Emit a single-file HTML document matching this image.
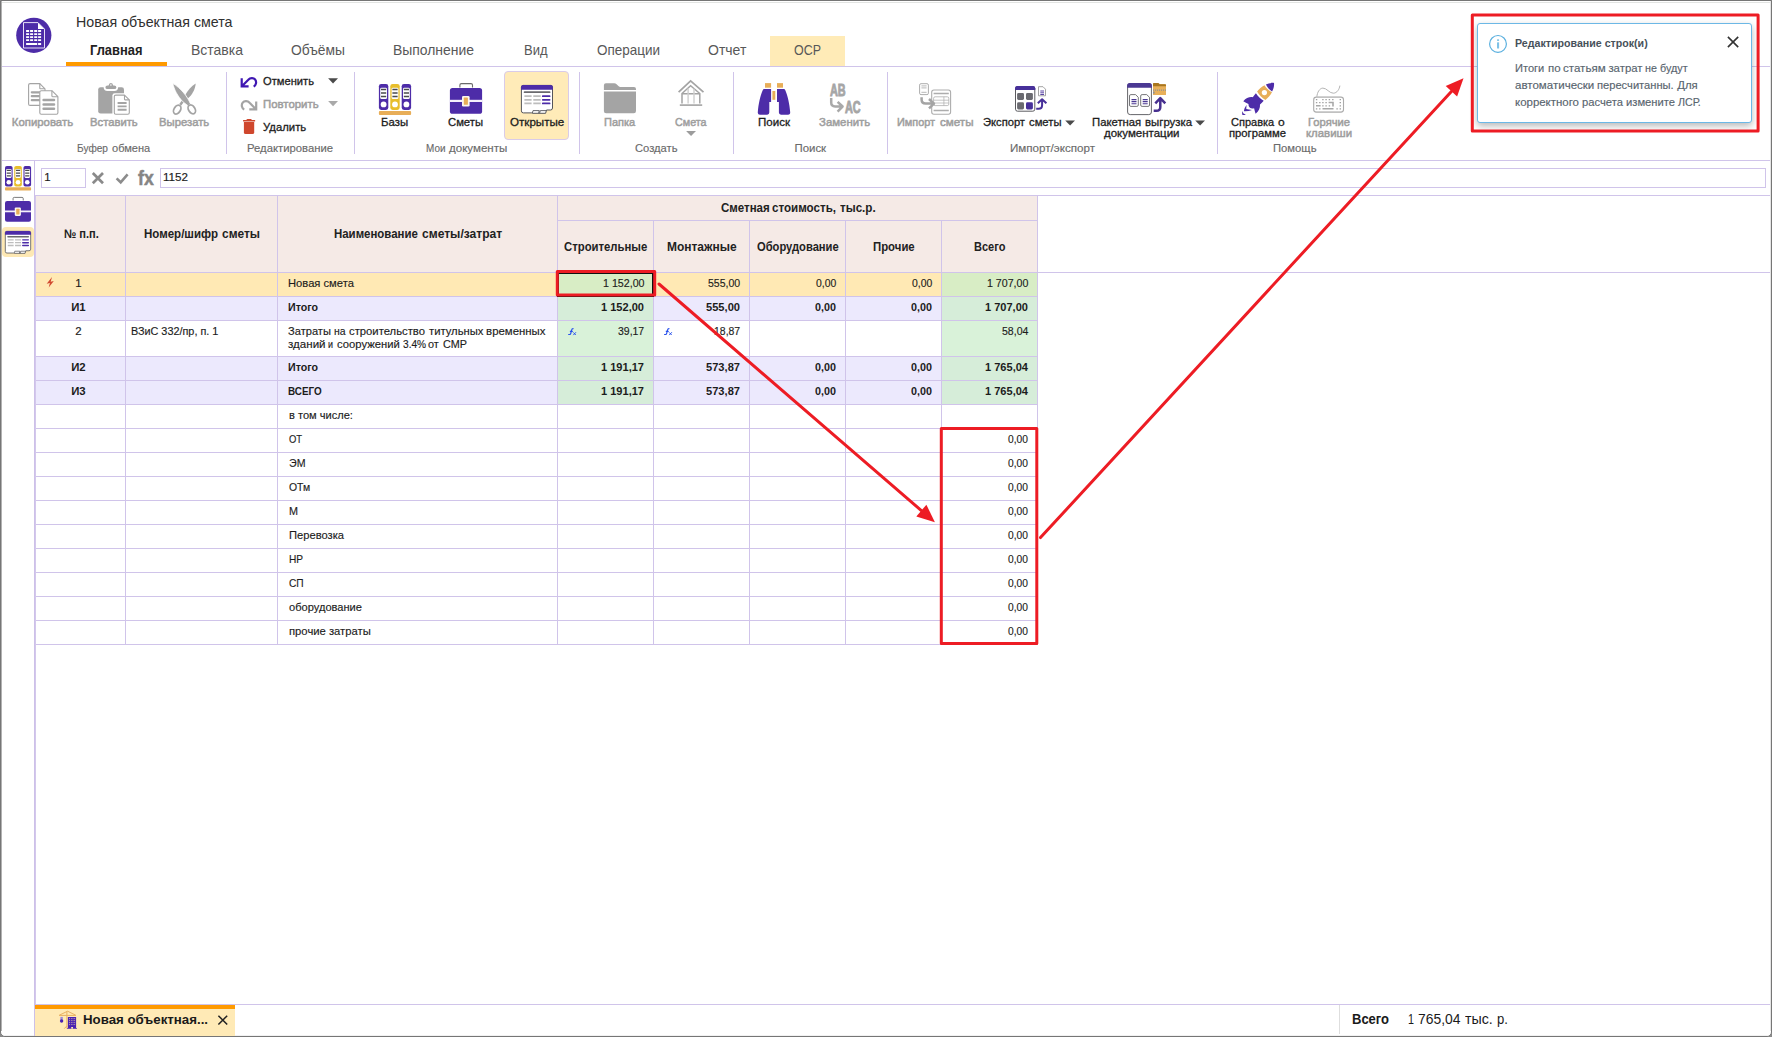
<!DOCTYPE html>
<html><head><meta charset="utf-8"><title>OSR</title>
<style>
html,body{margin:0;padding:0;}
body{width:1772px;height:1037px;overflow:hidden;background:#8a8a8a;font-family:"Liberation Sans",sans-serif;}
#app{position:absolute;left:0;top:0;width:1772px;height:1037px;overflow:hidden;}
#app>div{position:absolute;}
#app>svg{position:absolute;overflow:visible;}
.t{position:absolute;white-space:nowrap;line-height:20px;transform-origin:0 50%;}
.m{-webkit-text-stroke:0.3px currentColor;}
.md{-webkit-text-stroke:0.5px currentColor;}
.r{-webkit-text-stroke:0.15px currentColor;}
.ab{-webkit-text-stroke:0.9px currentColor;}
.fx{-webkit-text-stroke:0.5px currentColor;}
</style></head>
<body>
<div id="app">
<div style="left:0;top:0;width:1772px;height:1037px;box-sizing:border-box;background:#fff;border:1px solid #767676;border-radius:0 0 5px 5px;"></div>
<div style="left:1px;top:1px;width:1px;height:1030px;background:#b2b2b2;"></div>
<div style="left:1770px;top:1px;width:1px;height:1030px;background:#e4e4e4;"></div>
<div style="left:2px;top:2px;width:1768px;height:1px;background:#e2e4e2;"></div>
<div style="left:4px;top:1035px;width:1764px;height:1px;background:#f1f1f1;"></div>
<div style="left:770px;top:36px;width:75px;height:30px;background:#ffebb7;"></div>
<div style="left:2px;top:66px;width:1768px;height:1px;background:#d0c4ea;"></div>
<div style="left:66px;top:62px;width:101px;height:4px;background:#ff9a00;"></div>
<div style="left:2px;top:160px;width:1768px;height:1px;background:#d0c4ea;"></div>
<div style="left:226px;top:72px;width:1px;height:82px;background:#d0c4ea;"></div>
<div style="left:354px;top:72px;width:1px;height:82px;background:#d0c4ea;"></div>
<div style="left:579px;top:72px;width:1px;height:82px;background:#d0c4ea;"></div>
<div style="left:733px;top:72px;width:1px;height:82px;background:#d0c4ea;"></div>
<div style="left:887px;top:72px;width:1px;height:82px;background:#d0c4ea;"></div>
<div style="left:1217px;top:72px;width:1px;height:82px;background:#d0c4ea;"></div>
<div style="left:504px;top:71px;width:65px;height:69px;box-sizing:border-box;background:#ffebb8;border:1px solid #d9cbe9;border-radius:4px;"></div>
<div style="left:34px;top:161px;width:1px;height:875px;background:#cdc0e8;"></div>
<div style="left:2px;top:227px;width:32px;height:30px;background:#fde8b4;border-radius:4px;"></div>
<div style="left:41px;top:168px;width:45px;height:20px;box-sizing:border-box;border:1px solid #d0c4ea;background:#fff;"></div>
<div style="left:160px;top:168px;width:1606px;height:20px;box-sizing:border-box;border:1px solid #d0c4ea;background:#fff;"></div>
<div style="left:36px;top:196px;width:1001px;height:76px;background:#f5eae6;"></div>
<div style="left:36px;top:273px;width:1001px;height:23px;background:#ffe9b4;"></div>
<div style="left:36px;top:297px;width:1001px;height:23px;background:#ece9fd;"></div>
<div style="left:36px;top:357px;width:1001px;height:23px;background:#ece9fd;"></div>
<div style="left:36px;top:381px;width:1001px;height:23px;background:#ece9fd;"></div>
<div style="left:558px;top:273px;width:95px;height:23px;background:#d8edc5;"></div>
<div style="left:558px;top:297px;width:95px;height:23px;background:#d6edd9;"></div>
<div style="left:558px;top:321px;width:95px;height:35px;background:#d9f2d9;"></div>
<div style="left:558px;top:357px;width:95px;height:23px;background:#d6edd9;"></div>
<div style="left:558px;top:381px;width:95px;height:23px;background:#d6edd9;"></div>
<div style="left:942px;top:273px;width:95px;height:23px;background:#d8edc5;"></div>
<div style="left:942px;top:297px;width:95px;height:23px;background:#d6edd9;"></div>
<div style="left:942px;top:321px;width:95px;height:35px;background:#d9f2d9;"></div>
<div style="left:942px;top:357px;width:95px;height:23px;background:#d6edd9;"></div>
<div style="left:942px;top:381px;width:95px;height:23px;background:#d6edd9;"></div>
<div style="left:942px;top:405px;width:95px;height:23px;background:#fff;"></div>
<div style="left:35px;top:195px;width:1735px;height:1px;background:#d0c4ea;"></div>
<div style="left:35px;top:272px;width:1735px;height:1px;background:#d0c4ea;"></div>
<div style="left:557px;top:220px;width:480px;height:1px;background:#d0c4ea;"></div>
<div style="left:35px;top:296px;width:1003px;height:1px;background:#d0c4ea;"></div>
<div style="left:35px;top:320px;width:1003px;height:1px;background:#d0c4ea;"></div>
<div style="left:35px;top:356px;width:1003px;height:1px;background:#d0c4ea;"></div>
<div style="left:35px;top:380px;width:1003px;height:1px;background:#d0c4ea;"></div>
<div style="left:35px;top:404px;width:1003px;height:1px;background:#d0c4ea;"></div>
<div style="left:35px;top:428px;width:1003px;height:1px;background:#d0c4ea;"></div>
<div style="left:35px;top:452px;width:1003px;height:1px;background:#d0c4ea;"></div>
<div style="left:35px;top:476px;width:1003px;height:1px;background:#d0c4ea;"></div>
<div style="left:35px;top:500px;width:1003px;height:1px;background:#d0c4ea;"></div>
<div style="left:35px;top:524px;width:1003px;height:1px;background:#d0c4ea;"></div>
<div style="left:35px;top:548px;width:1003px;height:1px;background:#d0c4ea;"></div>
<div style="left:35px;top:572px;width:1003px;height:1px;background:#d0c4ea;"></div>
<div style="left:35px;top:596px;width:1003px;height:1px;background:#d0c4ea;"></div>
<div style="left:35px;top:620px;width:1003px;height:1px;background:#d0c4ea;"></div>
<div style="left:35px;top:644px;width:1003px;height:1px;background:#d0c4ea;"></div>
<div style="left:35px;top:195px;width:1px;height:810px;background:#d3c8ec;"></div>
<div style="left:125px;top:196px;width:1px;height:449px;background:#d0c4ea;"></div>
<div style="left:277px;top:196px;width:1px;height:449px;background:#d0c4ea;"></div>
<div style="left:557px;top:196px;width:1px;height:449px;background:#d0c4ea;"></div>
<div style="left:653px;top:221px;width:1px;height:424px;background:#d0c4ea;"></div>
<div style="left:749px;top:221px;width:1px;height:424px;background:#d0c4ea;"></div>
<div style="left:845px;top:221px;width:1px;height:424px;background:#d0c4ea;"></div>
<div style="left:941px;top:221px;width:1px;height:424px;background:#d0c4ea;"></div>
<div style="left:1037px;top:196px;width:1px;height:449px;background:#d0c4ea;"></div>
<div style="left:557px;top:272px;width:97px;height:25px;box-sizing:border-box;border:2px solid #111;"></div>
<div style="left:35px;top:1004px;width:1735px;height:1px;background:#d0c4ea;"></div>
<div style="left:35px;top:1005px;width:200px;height:31px;background:#ffeab6;"></div>
<div style="left:35px;top:1005px;width:200px;height:4px;background:#ff9a00;"></div>
<div style="left:1339px;top:1005px;width:1px;height:29px;background:#dedede;"></div>
<div style="left:1477px;top:23px;width:275px;height:100px;box-sizing:border-box;background:#fff;border:1px solid #6cb8e6;border-radius:3px;box-shadow:0 3px 7px rgba(0,0,0,.28);"></div>
<svg width="1772" height="1037" viewBox="0 0 1772 1037" style="left:0;top:0;" fill="none">
<circle cx="33.8" cy="35.3" r="17.6" fill="#4d2ca8"/>
<path d="M23.5 22.6H38L44.5 29.1V48H23.5Z" stroke="#e6e0f6" stroke-width="1" stroke-linejoin="round"/>
<path d="M38 22.8V29.1H44.3Z" fill="#fff"/>
<path d="M26.1 30.1h3v1.8h-3zM26.1 33.2h3v1.8h-3zM26.1 36.2h3v1.8h-3zM26.1 39.2h3v1.8h-3zM30.1 30.1h3v1.8h-3zM30.1 33.2h3v1.8h-3zM30.1 36.2h3v1.8h-3zM30.1 39.2h3v1.8h-3zM34.2 30.1h3v1.8h-3zM34.2 33.2h3v1.8h-3zM34.2 36.2h3v1.8h-3zM34.2 39.2h3v1.8h-3zM38.1 30.1h3v1.8h-3zM38.1 33.2h3v1.8h-3zM38.1 36.2h3v1.8h-3zM38.1 39.2h3v1.8h-3zM26.1 43h11.1v2h-11.1zM38.1 43h3v2h-3z" fill="#fff"/>
<path d="M30.1 83.6H39.8L45 88.8V103.9Q45 105.4 43.5 105.4H30.1Q28.6 105.4 28.6 103.9V85.1Q28.6 83.6 30.1 83.6Z" fill="#fff" stroke="#a4a4a4" stroke-width="1.1" stroke-linejoin="round"/><path d="M39.8 83.6V88.2Q39.8 88.8 40.4 88.8H45" stroke="#a4a4a4" stroke-width="1.1"/>
<path d="M31.8 92.3H40M31.8 96.2H40M31.8 100.2H40" stroke="#a4a4a4" stroke-width="2.2" stroke-linecap="round"/>
<path d="M41.3 90.7H51.9L57.9 96.7V112.7Q57.9 114.2 56.4 114.2H41.3Q39.8 114.2 39.8 112.7V92.2Q39.8 90.7 41.3 90.7Z" fill="#fff" stroke="#a4a4a4" stroke-width="1.1" stroke-linejoin="round"/><path d="M51.9 90.7V96.10000000000001Q51.9 96.7 52.5 96.7H57.9" stroke="#a4a4a4" stroke-width="1.1"/>
<path d="M43.6 100H54M43.6 104.4H54M43.6 108.8H54" stroke="#a4a4a4" stroke-width="2.5" stroke-linecap="round"/>
<rect x="98.2" y="87.2" width="25.8" height="26.4" rx="2.4" fill="#a4a4a4"/>
<path d="M103.6 86.8 Q103.6 91 107.5 91 H114.3 Q118.2 91 118.2 86.8 Z" fill="#fff"/>
<path d="M105.4 87.2 Q105.4 85.4 107.6 85.4 H108.6 Q109.2 83.1 110.9 83.1 Q112.6 83.1 113.2 85.4 H114.2 Q116.4 85.4 116.4 87.2 Q116.4 89.1 114.4 89.1 H107.4 Q105.4 89.1 105.4 87.2Z" fill="#a4a4a4"/>
<circle cx="110.9" cy="85" r="0.8" fill="#fff"/>
<rect x="112.4" y="93.2" width="18.6" height="22.4" rx="2.4" fill="#fff"/>
<path d="M115.8 95.1H124.50000000000001L129.3 99.89999999999999V112.7Q129.3 114.2 127.80000000000001 114.2H115.8Q114.3 114.2 114.3 112.7V96.6Q114.3 95.1 115.8 95.1Z" fill="#fff" stroke="#a4a4a4" stroke-width="1.1" stroke-linejoin="round"/><path d="M124.50000000000001 95.1V99.3Q124.50000000000001 99.89999999999999 125.10000000000001 99.89999999999999H129.3" stroke="#a4a4a4" stroke-width="1.1"/>
<path d="M117.6 103H126.6M117.6 106.4H126.6M117.6 109.7H126.6" stroke="#a4a4a4" stroke-width="1.9"/>
<path d="M195.7 83.5 C191.3 86.2 187.8 90.2 185.5 94.6 L187.9 98.6 C192.2 94.8 195.2 89.5 195.7 83.5Z" fill="#a4a4a4"/>
<path d="M183.4 100.4 L180.3 104.7" stroke="#a4a4a4" stroke-width="2.5"/>
<path d="M172.9 83.3 C173.8 89 177.6 96.4 183.2 102 L188.2 105.9 L190.4 103.7 C187.4 96.4 181 88.5 172.9 83.3Z" fill="#a4a4a4" stroke="#fff" stroke-width="0.8"/>
<ellipse cx="177.2" cy="109.6" rx="3.2" ry="4.8" transform="rotate(32 177.2 109.6)" stroke="#a4a4a4" stroke-width="1.8"/>
<ellipse cx="191.8" cy="109.4" rx="3.2" ry="4.8" transform="rotate(-32 191.8 109.4)" stroke="#a4a4a4" stroke-width="1.8"/>
<path d="M241.7 78.3V86.4H248.6M242.2 85.9L248.3 79.7C250.2 77.6 253.6 77.4 255.2 79.6C256.9 82 256 85.2 253.7 86.7" stroke="#3f17b2" stroke-width="2.2"/>
<path d="M256.2 101.4V109.4H249.3M255.7 108.9L249.6 102.7C247.7 100.6 244.3 100.4 242.7 102.6C241 105 241.9 108.2 244.2 109.7" stroke="#a4a4a4" stroke-width="2.2"/>
<path d="M246.4 120.3Q246.4 119.1 247.6 119.1H250.6Q251.8 119.1 251.8 120.3Z" fill="#cf472d"/>
<rect x="243" y="120" width="12.2" height="1.6" rx="0.5" fill="#cf472d"/>
<path d="M243.9 122.1H254.2V132.4Q254.2 134.1 252.5 134.1H245.6Q243.9 134.1 243.9 132.4Z" fill="#cf472d"/>
<path d="M328.1 78.2H338L333.05 83.4Z" fill="#4a4a4a"/>
<path d="M328.1 101.1H338L333.05 106.3Z" fill="#a9a9a9"/>
<rect x="378.9" y="84" width="9.4" height="25.9" rx="2.3" fill="#4d2ca8"/><rect x="380.2" y="87.7" width="6.8" height="11.4" rx="1.4" fill="#fff"/><path d="M381.0 89.5h5.2M381.0 93h5.2M381.0 96.5h5.2" stroke="#4a4a4e" stroke-width="1.5"/><circle cx="383.59999999999997" cy="104.4" r="2.9" fill="#fff"/><rect x="390.3" y="84" width="9.4" height="25.9" rx="2.3" fill="#e8be2c"/><rect x="391.6" y="87.7" width="6.8" height="11.4" rx="1.4" fill="#fff"/><path d="M392.40000000000003 89.5h5.2M392.40000000000003 93h5.2M392.40000000000003 96.5h5.2" stroke="#4a4a4e" stroke-width="1.5"/><circle cx="395.0" cy="104.4" r="2.9" fill="#fff"/><rect x="401.7" y="84" width="9.4" height="25.9" rx="2.3" fill="#4d2ca8"/><rect x="403.0" y="87.7" width="6.8" height="11.4" rx="1.4" fill="#fff"/><path d="M403.8 89.5h5.2M403.8 93h5.2M403.8 96.5h5.2" stroke="#4a4a4e" stroke-width="1.5"/><circle cx="406.4" cy="104.4" r="2.9" fill="#fff"/><rect x="378.9" y="110.9" width="32.2" height="4" rx="1" fill="#e8ae58"/>
<path d="M459.9 87.4V85Q459.9 83.6 461.4 83.6H471Q472.5 83.6 472.5 85V87.4" stroke="#6a6a6a" stroke-width="1.1"/><rect x="449.9" y="88" width="32.2" height="25.8" rx="2.6" fill="#4d2ca8"/><rect x="449.9" y="99.8" width="32.2" height="2.2" fill="#f4f0fb"/><rect x="462" y="96" width="7.6" height="10.5" rx="1.3" fill="#fbf6ee"/><rect x="463.8" y="97.6" width="4.1" height="7.2" rx="0.6" fill="#e8ae58"/>
<path d="M523.2 85.4H550.7Q552.5 85.4 552.5 87.2V108Q552.5 110 550.5 110H546.5L545.6 113.3H532.6L531.8 112.9H523.4Q521.4 112.9 521.4 110.9V87.2Q521.4 85.4 523.2 85.4Z" fill="#fff" stroke="#55555a" stroke-width="1"/><path d="M521 89.7V87.3Q521 85 523.3 85H550.6Q552.9 85 552.9 87.3V89.7Z" fill="#4d2ca8"/><path d="M532.3 113.2L533 110.6H539.3L538.6 113.2M539.6 113.2L540.3 110.6H546.4" stroke="#55555a" stroke-width="0.9"/><path d="M524.6 92.2H549.6" stroke="#6a6a6e" stroke-width="1.8" stroke-linecap="round"/><path d="M524.4 96.2H531.6M533.3 96.2H540.7M524.4 99.8H531.6M533.3 99.8H540.7M524.4 103.4H531.6M533.3 103.4H540.7" stroke="#bdbdbd" stroke-width="1.7"/><path d="M542.8 96.2H549.6M542.8 99.8H549.6M542.8 103.4H549.6" stroke="#4d2ca8" stroke-width="1.8" stroke-linecap="round"/>
<g transform="translate(5 166) scale(0.81 0.793) translate(-378.9 -84)"><rect x="378.9" y="84" width="9.4" height="25.9" rx="2.3" fill="#4d2ca8"/><rect x="380.2" y="87.7" width="6.8" height="11.4" rx="1.4" fill="#fff"/><path d="M381.0 89.5h5.2M381.0 93h5.2M381.0 96.5h5.2" stroke="#4a4a4e" stroke-width="1.5"/><circle cx="383.59999999999997" cy="104.4" r="2.9" fill="#fff"/><rect x="390.3" y="84" width="9.4" height="25.9" rx="2.3" fill="#e8be2c"/><rect x="391.6" y="87.7" width="6.8" height="11.4" rx="1.4" fill="#fff"/><path d="M392.40000000000003 89.5h5.2M392.40000000000003 93h5.2M392.40000000000003 96.5h5.2" stroke="#4a4a4e" stroke-width="1.5"/><circle cx="395.0" cy="104.4" r="2.9" fill="#fff"/><rect x="401.7" y="84" width="9.4" height="25.9" rx="2.3" fill="#4d2ca8"/><rect x="403.0" y="87.7" width="6.8" height="11.4" rx="1.4" fill="#fff"/><path d="M403.8 89.5h5.2M403.8 93h5.2M403.8 96.5h5.2" stroke="#4a4a4e" stroke-width="1.5"/><circle cx="406.4" cy="104.4" r="2.9" fill="#fff"/><rect x="378.9" y="110.9" width="32.2" height="4" rx="1" fill="#e8ae58"/></g>
<g transform="translate(5 197) scale(0.807 0.808) translate(-449.9 -83.1)"><path d="M459.9 87.4V85Q459.9 83.6 461.4 83.6H471Q472.5 83.6 472.5 85V87.4" stroke="#6a6a6a" stroke-width="1.1"/><rect x="449.9" y="88" width="32.2" height="25.8" rx="2.6" fill="#4d2ca8"/><rect x="449.9" y="99.8" width="32.2" height="2.2" fill="#f4f0fb"/><rect x="462" y="96" width="7.6" height="10.5" rx="1.3" fill="#fbf6ee"/><rect x="463.8" y="97.6" width="4.1" height="7.2" rx="0.6" fill="#e8ae58"/></g>
<g transform="translate(5 231) scale(0.815 0.79) translate(-521 -85)"><path d="M523.2 85.4H550.7Q552.5 85.4 552.5 87.2V108Q552.5 110 550.5 110H546.5L545.6 113.3H532.6L531.8 112.9H523.4Q521.4 112.9 521.4 110.9V87.2Q521.4 85.4 523.2 85.4Z" fill="#fff" stroke="#55555a" stroke-width="1"/><path d="M521 89.7V87.3Q521 85 523.3 85H550.6Q552.9 85 552.9 87.3V89.7Z" fill="#4d2ca8"/><path d="M532.3 113.2L533 110.6H539.3L538.6 113.2M539.6 113.2L540.3 110.6H546.4" stroke="#55555a" stroke-width="0.9"/><path d="M524.6 92.2H549.6" stroke="#6a6a6e" stroke-width="1.8" stroke-linecap="round"/><path d="M524.4 96.2H531.6M533.3 96.2H540.7M524.4 99.8H531.6M533.3 99.8H540.7M524.4 103.4H531.6M533.3 103.4H540.7" stroke="#bdbdbd" stroke-width="1.7"/><path d="M542.8 96.2H549.6M542.8 99.8H549.6M542.8 103.4H549.6" stroke="#4d2ca8" stroke-width="1.8" stroke-linecap="round"/></g>
<path d="M603.9 89.9V85.2Q603.9 83.2 605.9 83.2H614.2Q615.6 83.2 616.6 84.3L618.4 86Q619.3 86.9 620.6 86.9H634Q636 86.9 636 88.9V89.9Z" fill="#a4a4a4"/>
<path d="M603.9 91.6H636V111Q636 113.2 633.8 113.2H606.1Q603.9 113.2 603.9 111Z" fill="#a4a4a4"/>
<path d="M678.6 92.2L690.6 80.8L703.5 92.2" stroke="#a4a4a4" stroke-width="1.7"/>
<path d="M682 103.4V93.5L690.6 85.7L699.8 93.5V103.4M682 93.8H699.8" stroke="#a4a4a4" stroke-width="1.5"/>
<path d="M688.1 88.5V103.4M694 88.5V103.4" stroke="#cfcfcf" stroke-width="1.4"/>
<rect x="679.8" y="104.3" width="22.4" height="1.6" fill="#a4a4a4"/>
<path d="M686.1 131.1H696L691.05 136.1Z" fill="#9c9c9c"/>
<rect x="765" y="83.1" width="6.1" height="4.6" fill="#e8ae58"/><rect x="777" y="83.1" width="6" height="4.6" fill="#e8ae58"/>
<rect x="772.4" y="91" width="2.9" height="8.8" fill="#e8ae58"/>
<path d="M764.2 89.1H771.1V102H769.3V112.6Q769.3 114.7 767.2 114.7H760Q757.6 114.7 757.8 112.3C758.4 103.5 760.5 95.5 762.6 90.4Q763.2 89.1 764.2 89.1Z" fill="#4d2ca8"/>
<path d="M783.9 89.1H777V102H778.9V112.6Q778.9 114.7 781 114.7H788Q790.4 114.7 790.2 112.3C789.6 103.5 787.5 95.5 785.4 90.4Q784.8 89.1 783.9 89.1Z" fill="#4d2ca8"/>
<path d="M831.2 98V102.6Q831.2 106.5 835.1 106.5H841.5M837.6 101.8L842.6 106.5L837.6 111.6" stroke="#a9a9a9" stroke-width="2.5" stroke-linejoin="round"/>
<rect x="919.6" y="83.7" width="8.8" height="10.9" rx="1.4" stroke="#adadad" stroke-width="1" fill="#fff"/>
<path d="M921.4 85.9H926.6M921.4 87.9H926.6M921.4 92.4H926.6" stroke="#c6c6c6" stroke-width="1.1"/>
<rect x="931.7" y="90" width="18.9" height="24.2" rx="2.2" stroke="#adadad" stroke-width="1.1" fill="#fff"/>
<path d="M933.6 93.6H948.8M933.6 110.5H948.8" stroke="#adadad" stroke-width="1.5"/>
<rect x="933.6" y="96.8" width="15.2" height="8.8" rx="1.5" stroke="#adadad" stroke-width="0.8"/><path d="M933.6 100.2H948.8M933.6 103H948.8M943.9 96.8V105.6" stroke="#adadad" stroke-width="0.7"/>
<path d="M921.6 97.2V99.6Q921.6 103.6 925.6 103.6H933M929 99L934 103.6L929 108.3" stroke="#a4a4a4" stroke-width="2.5" stroke-linejoin="round"/>
<rect x="1015.5" y="86.5" width="19.3" height="24.7" rx="2" fill="#fff" stroke="#5c5c60" stroke-width="1"/>
<path d="M1015 90V88.3Q1015 86 1017.3 86H1033Q1035.3 86 1035.3 88.3V90Z" fill="#47309a"/>
<rect x="1017.1" y="92.9" width="6.9" height="7" rx="1.4" fill="#6a6a70"/><rect x="1026" y="92.9" width="6.9" height="7" rx="1.4" fill="#6a6a70"/><rect x="1017.1" y="102.3" width="6.9" height="7.1" rx="1.4" fill="#6a6a70"/>
<rect x="1026" y="102.3" width="6.9" height="7.1" rx="1.4" fill="#47309a"/>
<path d="M1038.5 86.7H1043L1045.5 89.2V95.8H1038.5Z" fill="#fff" stroke="#9a9a9a" stroke-width="0.9" stroke-linejoin="round"/>
<path d="M1040.3 91H1044M1040.3 92.8H1044M1040.3 94.5H1044" stroke="#47309a" stroke-width="0.9"/>
<path d="M1036.2 108.7H1038.6Q1042.1 108.7 1042.1 105.2V100M1037.8 103.2L1042.1 99.2L1046.4 103.2" stroke="#47309a" stroke-width="2" stroke-linejoin="round"/>
<path d="M1065.2 120.6H1075L1070.1 125.6Z" fill="#4a4a4a"/>
<rect x="1127.6" y="83.6" width="23.8" height="31" rx="2.6" fill="#fff" stroke="#66666a" stroke-width="1"/>
<path d="M1127.1 87.7V85.7Q1127.1 83.1 1129.7 83.1H1149.3Q1151.9 83.1 1151.9 85.7V87.7Z" fill="#4b3893"/>
<path d="M1130.9 94.6H1135.5L1138.3 97.3V105Q1138.3 106.4 1136.9 106.4H1130.9Q1129.5 106.4 1129.5 105V96Q1129.5 94.6 1130.9 94.6Z" fill="#fff" stroke="#66666a" stroke-width="0.9"/>
<path d="M1131.5 99.6H1136.5M1131.5 101.6H1136.5M1131.5 103.7H1136.5" stroke="#4b3893" stroke-width="1.1"/>
<path d="M1142.1000000000001 94.6H1146.7L1149.5 97.3V105Q1149.5 106.4 1148.1000000000001 106.4H1142.1000000000001Q1140.7 106.4 1140.7 105V96Q1140.7 94.6 1142.1000000000001 94.6Z" fill="#fff" stroke="#66666a" stroke-width="0.9"/>
<path d="M1142.7 99.6H1147.7M1142.7 101.6H1147.7M1142.7 103.7H1147.7" stroke="#4b3893" stroke-width="1.1"/>
<path d="M1153 95V84Q1153 83.1 1153.9 83.1H1158Q1158.7 83.1 1159.2 83.7L1159.6 84.2H1165.1Q1166 84.2 1166 85.1V95Z" fill="#e8b05a"/>
<path d="M1153 86.3V84Q1153 83.1 1153.9 83.1H1158Q1158.7 83.1 1159.2 83.7L1159.6 84.2H1165.1Q1166 84.2 1166 85.1V86.3Z" fill="#a8761e"/>
<path d="M1153 90.2H1166" stroke="#8a8f9a" stroke-width="1.2" stroke-dasharray="1 1"/><rect x="1153" y="91.6" width="1.6" height="2" fill="#8a8f9a"/>
<path d="M1153.7 110.8H1156.4Q1160.3 110.8 1160.3 106.9V99.4M1155.3 103.4L1160.3 98.2L1165.3 103.4" stroke="#47308f" stroke-width="2.5" stroke-linejoin="round"/>
<path d="M1195.2 120.6H1205L1200.1 125.6Z" fill="#4a4a4a"/>
<path d="M1274 82.9C1271 82.7 1268.2 83.3 1265.9 84.5C1267.4 87.4 1269.4 89.8 1272.1 91.4C1273.6 89 1274.3 86.1 1274 82.9Z" fill="#4d2ca8"/>
<path d="M1264.5 85.2C1261.6 86.8 1259.1 88.9 1257.1 91.4C1259.1 94.9 1261.9 97.7 1265.4 99.9C1268 97.9 1270.3 95.4 1272 92.3C1269 90.6 1266.3 88.3 1264.5 85.2Z" fill="#e8ae58"/>
<circle cx="1264.4" cy="92.6" r="2.6" fill="#fff"/>
<path d="M1255.9 93.3C1258 96.6 1260.5 99 1263.7 100.8C1262.5 102.2 1261.3 103.4 1260 104.4C1260.3 108 1258.8 111.2 1255.6 113.8C1254.9 111.6 1254.4 109.8 1254.1 108.2C1252.6 108.6 1251.3 108.6 1250.3 108.1C1249 107.2 1248.4 105.7 1248.5 104C1246.8 103.4 1245.1 102.5 1243.3 101.3C1246 98.1 1249.3 96.7 1252.8 97.2C1253.7 95.9 1254.8 94.6 1255.9 93.3Z" fill="#4d2ca8"/>
<path d="M1246.7 104.9C1245 106.8 1244 109 1243.9 111.3C1246.7 111.5 1249.5 111.1 1252 110.1C1249.8 109.9 1247.9 109.6 1246.3 109.1C1246.2 107.7 1246.4 106.3 1246.7 104.9ZM1242.4 111.1C1242 112.4 1242 113.7 1242.4 115C1243.6 115.1 1244.8 114.9 1245.9 114.4C1245 114.1 1244.2 113.8 1243.5 113.4C1243 112.7 1242.6 111.9 1242.4 111.1Z" fill="#4d2ca8"/>
<rect x="1313.7" y="97.1" width="29.8" height="15" rx="2.6" stroke="#ababab" stroke-width="1.1" fill="#fff"/>
<path d="M1316 97.3H1341.5M1316 112.2H1341.5" stroke="#c4c4c4" stroke-width="0.8"/>
<path d="M1316.9 96.6C1317.2 92.5 1319.5 88.2 1322.9 88.1C1326.7 88 1329.5 93.4 1333.4 93.2C1337 93 1339.3 89.5 1339.9 85.6" stroke="#ababab" stroke-width="0.9"/>
<path d="M1315.8999999999999 99.7h1.4M1322.2 99.7h1.4M1325.3999999999999 99.7h1.4M1328.7 99.7h1.4M1332.1 99.7h1.4M1339.6 99.7h1.4M1315.8999999999999 102.7h1.4M1319.1 102.7h1.4M1322.2 102.7h1.4M1325.3999999999999 102.7h1.4M1339.6 102.7h1.4M1322.2 105.8h1.4M1325.3999999999999 105.8h1.4M1328.7 105.8h1.4M1339.6 105.8h1.4M1315.8999999999999 108.8h1.4M1319.1 108.8h1.4M1336.3999999999999 108.8h1.4M1339.6 108.8h1.4" stroke="#a0a0a0" stroke-width="1.3"/>
<path d="M1316 105.8H1320.6M1322.5 108.8H1333.5" stroke="#a8a8a8" stroke-width="1.5"/><path d="M1328.6 102.5H1333V106.5" stroke="#a8a8a8" stroke-width="1.6"/>
<path d="M92.8 173L103 183.2M103 173L92.8 183.2" stroke="#8a8a8a" stroke-width="2.7"/>
<path d="M116.6 178.4L120.7 182.3L127.6 174.3" stroke="#8c8c8c" stroke-width="2.6"/>
<path d="M52 277.1L46.7 283.7L49.9 283L48.7 287.5L53.8 281.1L50.7 281.8Z" fill="#d1492f"/>
<path d="M568.1999999999999 334.5H569.5Q570.6 334.5 570.8 333.3L571.6 329.9Q571.9 328.4 573.5 328.6M569.9 331.4H572.8" stroke="#2750ec" stroke-width="1.15"/>
<path d="M573.3 332.4L575.8 335M576.0 332.2L573.3 335.1" stroke="#2750ec" stroke-width="0.95"/>
<path d="M664.0999999999999 334.5H665.4Q666.5 334.5 666.6999999999999 333.3L667.5 329.9Q667.8 328.4 669.4 328.6M665.8 331.4H668.6999999999999" stroke="#2750ec" stroke-width="1.15"/>
<path d="M669.1999999999999 332.4L671.6999999999999 335M671.9 332.2L669.1999999999999 335.1" stroke="#2750ec" stroke-width="0.95"/>
<path d="M66.9 1011.3V1028.6M59.1 1015.4H75.9M59.3 1015.2L67.6 1011.2L75.7 1015.2" stroke="#e8b060" stroke-width="1"/>
<path d="M64.3 1028.6L66.6 1026.2" stroke="#e8b060" stroke-width="1"/>
<rect x="60.4" y="1016.9" width="2.4" height="3" fill="#9c8bd6"/><circle cx="61.6" cy="1021" r="1.7" fill="#4a22b2"/>
<path d="M67.9 1017H76.1V1027.9H76.9V1028.8H67.1V1027.9H67.9Z" fill="#4a22b2"/>
<path d="M69.2 1018.6h0.8M70.9 1018.6h0.8M72.6 1018.6h0.8M74.3 1018.6h0.8M69.2 1020.6h0.8M70.9 1020.6h0.8M72.6 1020.6h0.8M74.3 1020.6h0.8M69.2 1022.6h0.8M70.9 1022.6h0.8M72.6 1022.6h0.8M74.3 1022.6h0.8M69.2 1024.6h0.8M70.9 1024.6h0.8M72.6 1024.6h0.8M74.3 1024.6h0.8" stroke="#f1d9a6" stroke-width="0.8"/>
<rect x="71.2" y="1027" width="1.8" height="1.6" fill="#ffe9b4"/>
<path d="M218.4 1015.7L227.2 1024.5M227.2 1015.7L218.4 1024.5" stroke="#222" stroke-width="1.5"/>
<circle cx="1498" cy="43.9" r="8.4" stroke="#5bb0df" stroke-width="1.2"/>
<rect x="1497" y="42.2" width="2.1" height="6.4" rx="0.6" fill="#7fc2e7"/><rect x="1497" y="39.2" width="2.1" height="1.7" rx="0.6" fill="#7fc2e7"/>
<path d="M1727.9 36.9L1738.2 47.1M1738.2 36.9L1727.9 47.1" stroke="#333" stroke-width="1.6"/>
</svg>
<span class="t" style="font-size:14.5px;font-weight:400;color:#303030;top:11.98px;left:76.00px;transform:scaleX(0.9813);">Новая объектная смета</span>
<span class="t" style="font-size:14.5px;font-weight:700;color:#222;top:39.98px;left:90.00px;transform:scaleX(0.8901);">Главная</span>
<span class="t" style="font-size:14.5px;font-weight:400;color:#585858;top:39.98px;left:191.00px;transform:scaleX(0.9646);">Вставка</span>
<span class="t" style="font-size:14.5px;font-weight:400;color:#585858;top:39.98px;left:291.00px;transform:scaleX(0.9536);">Объёмы</span>
<span class="t" style="font-size:14.5px;font-weight:400;color:#585858;top:39.98px;left:393.00px;transform:scaleX(0.9596);">Выполнение</span>
<span class="t" style="font-size:14.5px;font-weight:400;color:#585858;top:39.98px;left:523.50px;transform:scaleX(0.8958);">Вид</span>
<span class="t" style="font-size:14.5px;font-weight:400;color:#585858;top:39.98px;left:597.00px;transform:scaleX(0.9288);">Операции</span>
<span class="t" style="font-size:14.5px;font-weight:400;color:#585858;top:39.98px;left:707.90px;transform:scaleX(0.9647);">Отчет</span>
<span class="t" style="font-size:14.5px;font-weight:400;color:#585858;top:39.98px;left:794.00px;transform:scaleX(0.8593);">ОСР</span>
<span class="t md" style="font-size:11.4px;font-weight:400;color:#9e9e9e;top:112.05px;left:11.75px;">Копировать</span>
<span class="t md" style="font-size:11.4px;font-weight:400;color:#9e9e9e;top:112.05px;left:89.50px;transform:scaleX(0.9887);">Вставить</span>
<span class="t md" style="font-size:11.4px;font-weight:400;color:#9e9e9e;top:112.05px;left:159.25px;transform:scaleX(0.9917);">Вырезать</span>
<span class="t m" style="font-size:11.4px;font-weight:400;color:#1c1c1c;top:71.05px;left:263.00px;transform:scaleX(0.9796);">Отменить</span>
<span class="t md" style="font-size:11.4px;font-weight:400;color:#9e9e9e;top:94.05px;left:263.00px;">Повторить</span>
<span class="t m" style="font-size:11.4px;font-weight:400;color:#1c1c1c;top:117.05px;left:263.00px;transform:scaleX(0.9943);">Удалить</span>
<span class="t m" style="font-size:11.4px;font-weight:400;color:#1c1c1c;top:112.05px;left:381.00px;">Базы</span>
<span class="t m" style="font-size:11.4px;font-weight:400;color:#1c1c1c;top:112.05px;left:448.00px;transform:scaleX(0.9881);">Сметы</span>
<span class="t m" style="font-size:11.4px;font-weight:400;color:#1c1c1c;top:112.05px;left:509.50px;transform:scaleX(1.0173);">Открытые</span>
<span class="t md" style="font-size:11.4px;font-weight:400;color:#9e9e9e;top:112.05px;left:603.75px;transform:scaleX(0.9685);">Папка</span>
<span class="t md" style="font-size:11.4px;font-weight:400;color:#9e9e9e;top:112.05px;left:674.50px;transform:scaleX(0.9421);">Смета</span>
<span class="t m" style="font-size:11.4px;font-weight:400;color:#1c1c1c;top:112.05px;left:757.50px;transform:scaleX(1.0134);">Поиск</span>
<span class="t md" style="font-size:11.4px;font-weight:400;color:#9e9e9e;top:112.05px;left:819.00px;">Заменить</span>
<span class="t md" style="font-size:11.4px;font-weight:400;color:#9e9e9e;top:112.05px;left:897.00px;transform:scaleX(0.9541);">Импорт</span>
<span class="t md" style="font-size:11.4px;font-weight:400;color:#9e9e9e;top:112.05px;left:939.50px;transform:scaleX(1.0185);">сметы</span>
<span class="t m" style="font-size:11.4px;font-weight:400;color:#1c1c1c;top:112.05px;left:982.50px;transform:scaleX(0.9810);">Экспорт</span>
<span class="t m" style="font-size:11.4px;font-weight:400;color:#1c1c1c;top:112.05px;left:1028.75px;transform:scaleX(0.9881);">сметы</span>
<span class="t m" style="font-size:11.4px;font-weight:400;color:#1c1c1c;top:112.05px;left:1092.00px;transform:scaleX(0.9928);">Пакетная</span>
<span class="t m" style="font-size:11.4px;font-weight:400;color:#1c1c1c;top:112.05px;left:1145.00px;">выгрузка</span>
<span class="t m" style="font-size:11.4px;font-weight:400;color:#1c1c1c;top:123.05px;left:1104.00px;transform:scaleX(1.0094);">документации</span>
<span class="t m" style="font-size:11.4px;font-weight:400;color:#1c1c1c;top:112.05px;left:1231.25px;transform:scaleX(0.9678);">Справка</span>
<span class="t m" style="font-size:11.4px;font-weight:400;color:#1c1c1c;top:112.05px;left:1278.00px;transform:scaleX(1.0562);">о</span>
<span class="t m" style="font-size:11.4px;font-weight:400;color:#1c1c1c;top:123.05px;left:1229.00px;transform:scaleX(0.9884);">программе</span>
<span class="t md" style="font-size:11.4px;font-weight:400;color:#9e9e9e;top:112.05px;left:1307.50px;transform:scaleX(0.9825);">Горячие</span>
<span class="t md" style="font-size:11.4px;font-weight:400;color:#9e9e9e;top:123.05px;left:1306.00px;">клавиши</span>
<span class="t r" style="font-size:11.4px;font-weight:400;color:#6a6a6a;top:138.05px;left:77.00px;transform:scaleX(0.8897);">Буфер</span>
<span class="t r" style="font-size:11.4px;font-weight:400;color:#6a6a6a;top:138.05px;left:111.75px;transform:scaleX(0.9707);">обмена</span>
<span class="t r" style="font-size:11.4px;font-weight:400;color:#6a6a6a;top:138.05px;left:247.00px;transform:scaleX(0.9910);">Редактирование</span>
<span class="t r" style="font-size:11.4px;font-weight:400;color:#6a6a6a;top:138.05px;left:425.50px;transform:scaleX(0.8733);">Мои</span>
<span class="t r" style="font-size:11.4px;font-weight:400;color:#6a6a6a;top:138.05px;left:449.25px;transform:scaleX(1.0125);">документы</span>
<span class="t r" style="font-size:11.4px;font-weight:400;color:#6a6a6a;top:138.05px;left:634.50px;transform:scaleX(0.9816);">Создать</span>
<span class="t r" style="font-size:11.4px;font-weight:400;color:#6a6a6a;top:138.05px;left:794.50px;">Поиск</span>
<span class="t r" style="font-size:11.4px;font-weight:400;color:#6a6a6a;top:138.05px;left:1009.50px;transform:scaleX(1.0189);">Импорт/экспорт</span>
<span class="t r" style="font-size:11.4px;font-weight:400;color:#6a6a6a;top:138.05px;left:1272.50px;transform:scaleX(0.9886);">Помощь</span>
<span class="t r" style="font-size:11.4px;font-weight:400;color:#1c1c1c;top:167.05px;left:44.30px;">1</span>
<span class="t r" style="font-size:11.4px;font-weight:400;color:#1c1c1c;top:167.05px;left:162.50px;transform:scaleX(1.0204);">1152</span>
<span class="t" style="font-size:12.4px;font-weight:700;color:#222;top:223.70px;left:63.60px;transform:scaleX(0.8898);">№ п.п.</span>
<span class="t" style="font-size:12.4px;font-weight:700;color:#222;top:223.70px;left:144.30px;transform:scaleX(0.9288);">Номер/шифр</span>
<span class="t" style="font-size:12.4px;font-weight:700;color:#222;top:223.70px;left:221.70px;transform:scaleX(0.9635);">сметы</span>
<span class="t" style="font-size:12.4px;font-weight:700;color:#222;top:223.70px;left:334.30px;transform:scaleX(0.9229);">Наименование</span>
<span class="t" style="font-size:12.4px;font-weight:700;color:#222;top:223.70px;left:421.50px;transform:scaleX(0.9736);">сметы/затрат</span>
<span class="t" style="font-size:12.4px;font-weight:700;color:#222;top:197.70px;left:720.50px;transform:scaleX(0.9273);">Сметная</span>
<span class="t" style="font-size:12.4px;font-weight:700;color:#222;top:197.70px;left:772.40px;transform:scaleX(0.9354);">стоимость,</span>
<span class="t" style="font-size:12.4px;font-weight:700;color:#222;top:197.70px;left:839.60px;transform:scaleX(0.9395);">тыс.р.</span>
<span class="t" style="font-size:12.4px;font-weight:700;color:#222;top:236.70px;left:564.40px;transform:scaleX(0.9135);">Строительные</span>
<span class="t" style="font-size:12.4px;font-weight:700;color:#222;top:236.70px;left:667.00px;transform:scaleX(0.9656);">Монтажные</span>
<span class="t" style="font-size:12.4px;font-weight:700;color:#222;top:236.70px;left:757.00px;transform:scaleX(0.9015);">Оборудование</span>
<span class="t" style="font-size:12.4px;font-weight:700;color:#222;top:236.70px;left:873.00px;transform:scaleX(0.9177);">Прочие</span>
<span class="t" style="font-size:12.4px;font-weight:700;color:#222;top:236.70px;left:974.30px;transform:scaleX(0.8896);">Всего</span>
<span class="t r" style="font-size:11.4px;font-weight:400;color:#1c1c1c;top:273.05px;left:75.13px;">1</span>
<span class="t r" style="font-size:11.4px;font-weight:400;color:#1c1c1c;top:273.05px;left:288.30px;transform:scaleX(0.9827);">Новая смета</span>
<span class="t r" style="font-size:11.4px;font-weight:400;color:#1c1c1c;top:273.05px;left:602.50px;transform:scaleX(0.9359);">1 152,00</span>
<span class="t r" style="font-size:11.4px;font-weight:400;color:#1c1c1c;top:273.05px;left:707.80px;transform:scaleX(0.9241);">555,00</span>
<span class="t r" style="font-size:11.4px;font-weight:400;color:#1c1c1c;top:273.05px;left:815.60px;transform:scaleX(0.9111);">0,00</span>
<span class="t r" style="font-size:11.4px;font-weight:400;color:#1c1c1c;top:273.05px;left:911.50px;transform:scaleX(0.9111);">0,00</span>
<span class="t r" style="font-size:11.4px;font-weight:400;color:#1c1c1c;top:273.05px;left:986.60px;transform:scaleX(0.9336);">1 707,00</span>
<span class="t" style="font-size:11.4px;font-weight:700;color:#1c1c1c;top:297.05px;left:71.13px;">И1</span>
<span class="t" style="font-size:11.4px;font-weight:700;color:#1c1c1c;top:297.05px;left:288.30px;transform:scaleX(0.9339);">Итого</span>
<span class="t" style="font-size:11.4px;font-weight:700;color:#1c1c1c;top:297.05px;left:601.00px;transform:scaleX(0.9697);">1 152,00</span>
<span class="t" style="font-size:11.4px;font-weight:700;color:#1c1c1c;top:297.05px;left:706.00px;transform:scaleX(0.9758);">555,00</span>
<span class="t" style="font-size:11.4px;font-weight:700;color:#1c1c1c;top:297.05px;left:814.90px;transform:scaleX(0.9426);">0,00</span>
<span class="t" style="font-size:11.4px;font-weight:700;color:#1c1c1c;top:297.05px;left:910.80px;transform:scaleX(0.9426);">0,00</span>
<span class="t" style="font-size:11.4px;font-weight:700;color:#1c1c1c;top:297.05px;left:985.10px;transform:scaleX(0.9674);">1 707,00</span>
<span class="t r" style="font-size:11.4px;font-weight:400;color:#1c1c1c;top:321.05px;left:75.33px;">2</span>
<span class="t r" style="font-size:11.4px;font-weight:400;color:#1c1c1c;top:321.05px;left:131.00px;transform:scaleX(0.9532);">ВЗиС 332/пр, п. 1</span>
<span class="t r" style="font-size:11.4px;font-weight:400;color:#1c1c1c;top:321.05px;left:287.70px;transform:scaleX(0.9747);">Затраты</span>
<span class="t r" style="font-size:11.4px;font-weight:400;color:#1c1c1c;top:321.05px;left:334.30px;transform:scaleX(0.9177);">на</span>
<span class="t r" style="font-size:11.4px;font-weight:400;color:#1c1c1c;top:321.05px;left:349.40px;transform:scaleX(0.9902);">строительство</span>
<span class="t r" style="font-size:11.4px;font-weight:400;color:#1c1c1c;top:321.05px;left:428.50px;transform:scaleX(0.9887);">титульных</span>
<span class="t r" style="font-size:11.4px;font-weight:400;color:#1c1c1c;top:321.05px;left:486.10px;">временных</span>
<span class="t r" style="font-size:11.4px;font-weight:400;color:#1c1c1c;top:334.05px;left:287.70px;transform:scaleX(1.0166);">зданий</span>
<span class="t r" style="font-size:11.4px;font-weight:400;color:#1c1c1c;top:334.05px;left:328.40px;transform:scaleX(0.7843);">и</span>
<span class="t r" style="font-size:11.4px;font-weight:400;color:#1c1c1c;top:334.05px;left:336.80px;transform:scaleX(0.9874);">сооружений</span>
<span class="t r" style="font-size:11.4px;font-weight:400;color:#1c1c1c;top:334.05px;left:402.60px;transform:scaleX(0.8895);">3.4%</span>
<span class="t r" style="font-size:11.4px;font-weight:400;color:#1c1c1c;top:334.05px;left:428.40px;transform:scaleX(0.9547);">от</span>
<span class="t r" style="font-size:11.4px;font-weight:400;color:#1c1c1c;top:334.05px;left:442.70px;transform:scaleX(0.9489);">СМР</span>
<span class="t r" style="font-size:11.4px;font-weight:400;color:#1c1c1c;top:321.05px;left:617.80px;transform:scaleX(0.9188);">39,17</span>
<span class="t r" style="font-size:11.4px;font-weight:400;color:#1c1c1c;top:321.05px;left:713.80px;transform:scaleX(0.9188);">18,87</span>
<span class="t r" style="font-size:11.4px;font-weight:400;color:#1c1c1c;top:321.05px;left:1001.60px;transform:scaleX(0.9258);">58,04</span>
<span class="t" style="font-size:11.4px;font-weight:700;color:#1c1c1c;top:357.05px;left:71.13px;">И2</span>
<span class="t" style="font-size:11.4px;font-weight:700;color:#1c1c1c;top:357.05px;left:288.30px;transform:scaleX(0.9339);">Итого</span>
<span class="t" style="font-size:11.4px;font-weight:700;color:#1c1c1c;top:357.05px;left:601.00px;transform:scaleX(0.9697);">1 191,17</span>
<span class="t" style="font-size:11.4px;font-weight:700;color:#1c1c1c;top:357.05px;left:706.00px;transform:scaleX(0.9758);">573,87</span>
<span class="t" style="font-size:11.4px;font-weight:700;color:#1c1c1c;top:357.05px;left:814.90px;transform:scaleX(0.9426);">0,00</span>
<span class="t" style="font-size:11.4px;font-weight:700;color:#1c1c1c;top:357.05px;left:910.80px;transform:scaleX(0.9426);">0,00</span>
<span class="t" style="font-size:11.4px;font-weight:700;color:#1c1c1c;top:357.05px;left:985.00px;transform:scaleX(0.9697);">1 765,04</span>
<span class="t" style="font-size:11.4px;font-weight:700;color:#1c1c1c;top:381.05px;left:71.13px;">И3</span>
<span class="t" style="font-size:11.4px;font-weight:700;color:#1c1c1c;top:381.05px;left:288.30px;transform:scaleX(0.8686);">ВСЕГО</span>
<span class="t" style="font-size:11.4px;font-weight:700;color:#1c1c1c;top:381.05px;left:601.00px;transform:scaleX(0.9697);">1 191,17</span>
<span class="t" style="font-size:11.4px;font-weight:700;color:#1c1c1c;top:381.05px;left:706.00px;transform:scaleX(0.9758);">573,87</span>
<span class="t" style="font-size:11.4px;font-weight:700;color:#1c1c1c;top:381.05px;left:814.90px;transform:scaleX(0.9426);">0,00</span>
<span class="t" style="font-size:11.4px;font-weight:700;color:#1c1c1c;top:381.05px;left:910.80px;transform:scaleX(0.9426);">0,00</span>
<span class="t" style="font-size:11.4px;font-weight:700;color:#1c1c1c;top:381.05px;left:985.00px;transform:scaleX(0.9697);">1 765,04</span>
<span class="t r" style="font-size:11.4px;font-weight:400;color:#1c1c1c;top:405.05px;left:288.60px;transform:scaleX(0.9714);">в том числе:</span>
<span class="t r" style="font-size:11.4px;font-weight:400;color:#1c1c1c;top:429.05px;left:288.60px;transform:scaleX(0.8276);">ОТ</span>
<span class="t r" style="font-size:11.4px;font-weight:400;color:#1c1c1c;top:429.05px;left:1007.60px;transform:scaleX(0.8975);">0,00</span>
<span class="t r" style="font-size:11.4px;font-weight:400;color:#1c1c1c;top:453.05px;left:288.60px;transform:scaleX(0.9329);">ЭМ</span>
<span class="t r" style="font-size:11.4px;font-weight:400;color:#1c1c1c;top:453.05px;left:1007.60px;transform:scaleX(0.8975);">0,00</span>
<span class="t r" style="font-size:11.4px;font-weight:400;color:#1c1c1c;top:477.05px;left:288.60px;transform:scaleX(0.9155);">ОТм</span>
<span class="t r" style="font-size:11.4px;font-weight:400;color:#1c1c1c;top:477.05px;left:1007.60px;transform:scaleX(0.8975);">0,00</span>
<span class="t r" style="font-size:11.4px;font-weight:400;color:#1c1c1c;top:501.05px;left:288.60px;transform:scaleX(0.9474);">М</span>
<span class="t r" style="font-size:11.4px;font-weight:400;color:#1c1c1c;top:501.05px;left:1007.60px;transform:scaleX(0.8975);">0,00</span>
<span class="t r" style="font-size:11.4px;font-weight:400;color:#1c1c1c;top:525.05px;left:288.60px;transform:scaleX(0.9817);">Перевозка</span>
<span class="t r" style="font-size:11.4px;font-weight:400;color:#1c1c1c;top:525.05px;left:1007.60px;transform:scaleX(0.8975);">0,00</span>
<span class="t r" style="font-size:11.4px;font-weight:400;color:#1c1c1c;top:549.05px;left:288.60px;transform:scaleX(0.8908);">НР</span>
<span class="t r" style="font-size:11.4px;font-weight:400;color:#1c1c1c;top:549.05px;left:1007.60px;transform:scaleX(0.8975);">0,00</span>
<span class="t r" style="font-size:11.4px;font-weight:400;color:#1c1c1c;top:573.05px;left:288.60px;transform:scaleX(0.8951);">СП</span>
<span class="t r" style="font-size:11.4px;font-weight:400;color:#1c1c1c;top:573.05px;left:1007.60px;transform:scaleX(0.8975);">0,00</span>
<span class="t r" style="font-size:11.4px;font-weight:400;color:#1c1c1c;top:597.05px;left:288.60px;transform:scaleX(0.9739);">оборудование</span>
<span class="t r" style="font-size:11.4px;font-weight:400;color:#1c1c1c;top:597.05px;left:1007.60px;transform:scaleX(0.8975);">0,00</span>
<span class="t r" style="font-size:11.4px;font-weight:400;color:#1c1c1c;top:621.05px;left:288.60px;transform:scaleX(0.9887);">прочие затраты</span>
<span class="t r" style="font-size:11.4px;font-weight:400;color:#1c1c1c;top:621.05px;left:1007.60px;transform:scaleX(0.8975);">0,00</span>
<span class="t" style="font-size:13.4px;font-weight:700;color:#1a1a1a;top:1009.96px;left:83.20px;transform:scaleX(0.9910);">Новая объектная...</span>
<span class="t" style="font-size:15px;font-weight:700;color:#1a1a1a;top:1009.10px;left:1352.20px;transform:scaleX(0.8658);">Всего</span>
<span class="t" style="font-size:15px;font-weight:400;color:#1a1a1a;top:1009.10px;left:1407.60px;transform:scaleX(0.7191);">1</span>
<span class="t" style="font-size:15px;font-weight:400;color:#1a1a1a;top:1009.10px;left:1418.30px;transform:scaleX(0.9261);">765,04</span>
<span class="t" style="font-size:15px;font-weight:400;color:#1a1a1a;top:1009.10px;left:1464.80px;transform:scaleX(0.9479);">тыс.</span>
<span class="t" style="font-size:15px;font-weight:400;color:#1a1a1a;top:1009.10px;left:1496.60px;transform:scaleX(0.8709);">р.</span>
<span class="t" style="font-size:11.4px;font-weight:700;color:#47515a;top:33.05px;left:1515.30px;transform:scaleX(0.9338);">Редактирование строк(и)</span>
<span class="t r" style="font-size:11.4px;font-weight:400;color:#58646e;top:58.05px;left:1515.20px;transform:scaleX(0.9721);">Итоги</span>
<span class="t r" style="font-size:11.4px;font-weight:400;color:#58646e;top:58.05px;left:1548.00px;transform:scaleX(1.0067);">по</span>
<span class="t r" style="font-size:11.4px;font-weight:400;color:#58646e;top:58.05px;left:1563.20px;transform:scaleX(1.0135);">статьям</span>
<span class="t r" style="font-size:11.4px;font-weight:400;color:#58646e;top:58.05px;left:1608.40px;">затрат</span>
<span class="t r" style="font-size:11.4px;font-weight:400;color:#58646e;top:58.05px;left:1645.00px;transform:scaleX(0.9414);">не</span>
<span class="t r" style="font-size:11.4px;font-weight:400;color:#58646e;top:58.05px;left:1659.70px;transform:scaleX(0.9501);">будут</span>
<span class="t r" style="font-size:11.4px;font-weight:400;color:#58646e;top:75.05px;left:1515.20px;transform:scaleX(1.0118);">автоматически</span>
<span class="t r" style="font-size:11.4px;font-weight:400;color:#58646e;top:75.05px;left:1597.10px;transform:scaleX(0.9782);">пересчитанны.</span>
<span class="t r" style="font-size:11.4px;font-weight:400;color:#58646e;top:75.05px;left:1677.20px;">Для</span>
<span class="t r" style="font-size:11.4px;font-weight:400;color:#58646e;top:92.05px;left:1515.20px;transform:scaleX(1.0054);">корректного</span>
<span class="t r" style="font-size:11.4px;font-weight:400;color:#58646e;top:92.05px;left:1582.40px;transform:scaleX(0.9841);">расчета</span>
<span class="t r" style="font-size:11.4px;font-weight:400;color:#58646e;top:92.05px;left:1626.40px;transform:scaleX(0.9831);">измените</span>
<span class="t r" style="font-size:11.4px;font-weight:400;color:#58646e;top:92.05px;left:1678.30px;transform:scaleX(0.9378);">ЛСР.</span>
<span class="t ab" style="font-size:15.8px;font-weight:700;color:#a6a6a6;top:80.93px;left:830.00px;transform:scaleX(0.6877);">AB</span>
<span class="t ab" style="font-size:15.8px;font-weight:700;color:#a6a6a6;top:97.73px;left:844.70px;transform:scaleX(0.6877);">AC</span>
<span class="t fx" style="font-size:20.6px;font-weight:700;color:#858585;top:167.86px;left:138.00px;transform:scaleX(0.8573);">fx</span>
<svg width="1772" height="1037" viewBox="0 0 1772 1037" style="left:0;top:0;" fill="none"><g stroke="#ed1c24" stroke-width="3" stroke-linejoin="round"><rect x="557.3" y="271.5" width="97.4" height="23.5"/><rect x="941.3" y="428.4" width="95.5" height="215.1"/><rect x="1472.3" y="15" width="285.8" height="116"/></g><line x1="659.0" y1="284.0" x2="921.4" y2="510.6" stroke="#ed1c24" stroke-width="3" stroke-linecap="round"/><polygon points="934.9,522.3 916.3,516.5 926.4,504.7" fill="#ed1c24"/><line x1="1040.5" y1="537.6" x2="1451.4" y2="91.4" stroke="#ed1c24" stroke-width="3" stroke-linecap="round"/><polygon points="1463.5,78.2 1457.1,96.6 1445.7,86.1" fill="#ed1c24"/></svg>
</div>
</body></html>
